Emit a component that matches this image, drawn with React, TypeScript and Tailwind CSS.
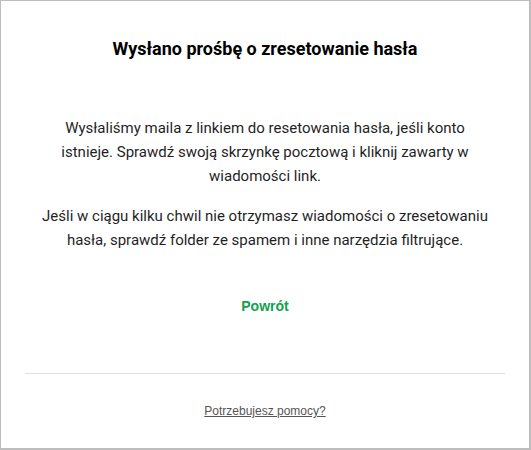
export default function App() {
  return (
    <div className="h-[450px] w-[531px] bg-white">
      <div className="flex h-full flex-col border-t border-l border-r-2 border-b-2 border-[#bdbdbd] px-6 font-['Roboto',sans-serif]">
        <h1 className="pt-[37px] text-center text-[18px] font-bold leading-[22px] text-black">
          Wysłano prośbę o zresetowanie hasła
        </h1>

        <div className="mt-[56px] flex flex-col gap-4 text-center text-[15px] leading-6 text-[#1f1f1f]">
          <p className="px-6">
            Wysłaliśmy maila z linkiem do resetowania hasła, jeśli konto istnieje. Sprawdź swoją skrzynkę
            pocztową i kliknij zawarty w wiadomości link.
          </p>
          <p>
            Jeśli w ciągu kilku chwil nie otrzymasz wiadomości o zresetowaniu hasła, sprawdź folder ze spamem i
            inne narzędzia filtrujące.
          </p>
        </div>

        <div className="mt-[44px] text-center leading-5">
          <a href="#" className="font-['Liberation_Sans',sans-serif] text-[14px] font-bold text-[#12a150]">
            Powrót
          </a>
        </div>

        <div className="mt-[57px] border-t border-[#e0e0e0]" />

        <div className="mt-[28px] text-center leading-4">
          <a href="#" className="font-['Liberation_Sans',sans-serif] text-[12px] text-[#555] underline">
            Potrzebujesz pomocy?
          </a>
        </div>
      </div>
    </div>
  );
}
